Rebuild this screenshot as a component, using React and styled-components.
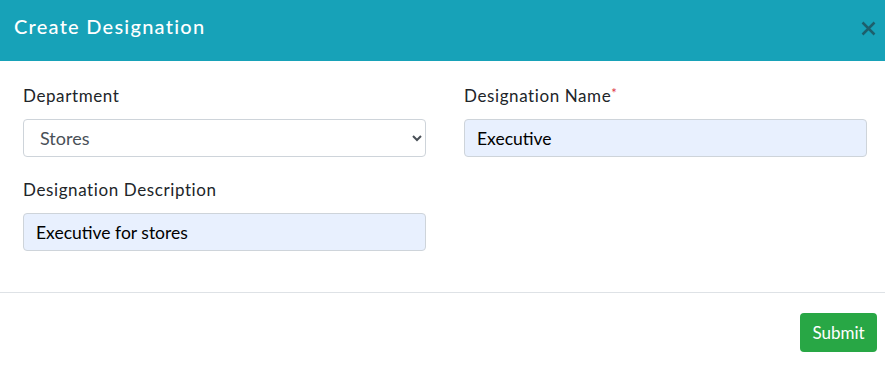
import React from "react";
import styled, { createGlobalStyle } from "styled-components";

const Global = createGlobalStyle`
  html, body { margin: 0; padding: 0; background: #fff; }
  body { font-family: Lato, "Open Sans", sans-serif; color: #212529; }
  * { box-sizing: border-box; }
`;

const Modal = styled.div`
  width: 885px;
  background: #fff;
`;

const Header = styled.div`
  height: 61px;
  background: #17a2b8;
  display: flex;
  align-items: flex-start;
  justify-content: space-between;
  padding: 11px 9px 0 14px;
`;

const Title = styled.h5`
  margin: 0;
  font-size: 20px;
  font-weight: 500;
  letter-spacing: 1.25px;
  color: #fff;
  line-height: 30px;
`;

const Close = styled.button`
  border: 0;
  background: transparent;
  padding: 0;
  width: 15px;
  height: 15px;
  margin-top: 10px;
  display: flex;
  cursor: pointer;
`;

const Body = styled.div`
  padding: 23px 18px 41px 23px;
  display: grid;
  grid-template-columns: 1fr 1fr;
  column-gap: 38px;
  row-gap: 21px;
  border-bottom: 1px solid #dee2e6;
`;

const Field = styled.div`
  display: flex;
  flex-direction: column;
`;

const Label = styled.label`
  font-size: 17px;
  letter-spacing: 0.6px;
  line-height: 24px;
  margin-bottom: 11px;
  color: #212529;
`;

const Req = styled.span`
  color: #dc3545;
  font-size: 13px;
  letter-spacing: 0;
  vertical-align: top;
  line-height: 18px;
`;

const Input = styled.input`
  height: 38px;
  padding: 0 12px;
  font-family: Lato, sans-serif;
  font-size: 17.5px;
  color: #000;
  background: #e8f0fe;
  border: 1px solid #ced4da;
  border-radius: 4px;
  outline: none;
`;

const Select = styled.select`
  height: 38px;
  padding: 0 8px 0 12px;
  font-family: Lato, sans-serif;
  font-size: 18px;
  color: #495057;
  background: #fff;
  border: 1px solid #ced4da;
  border-radius: 4px;
  outline: none;
`;

const Footer = styled.div`
  display: flex;
  justify-content: flex-end;
  padding: 20px 8px 13px;
`;

const Button = styled.button`
  height: 39px;
  width: 77px;
  background: #28a745;
  color: #fff;
  border: 0;
  border-radius: 4px;
  font-family: Lato, sans-serif;
  font-size: 17px;
`;

export default function App() {
  return (
    <Modal>
      <Global />
      <Header>
        <Title>Create Designation</Title>
        <Close aria-label="close">
          <svg width="15" height="15" viewBox="0 0 15 15">
            <path d="M1.5 1.5 L13.5 13.5 M13.5 1.5 L1.5 13.5" stroke="#1d5f6c" strokeWidth="2.5" />
          </svg>
        </Close>
      </Header>
      <Body>
        <Field>
          <Label>Department</Label>
          <Select defaultValue="Stores">
            <option>Stores</option>
            <option>Accounts</option>
          </Select>
        </Field>
        <Field>
          <Label>
            Designation Name<Req>*</Req>
          </Label>
          <Input defaultValue="Executive" />
        </Field>
        <Field>
          <Label>Designation Description</Label>
          <Input defaultValue="Executive for stores" />
        </Field>
      </Body>
      <Footer>
        <Button>Submit</Button>
      </Footer>
    </Modal>
  );
}
